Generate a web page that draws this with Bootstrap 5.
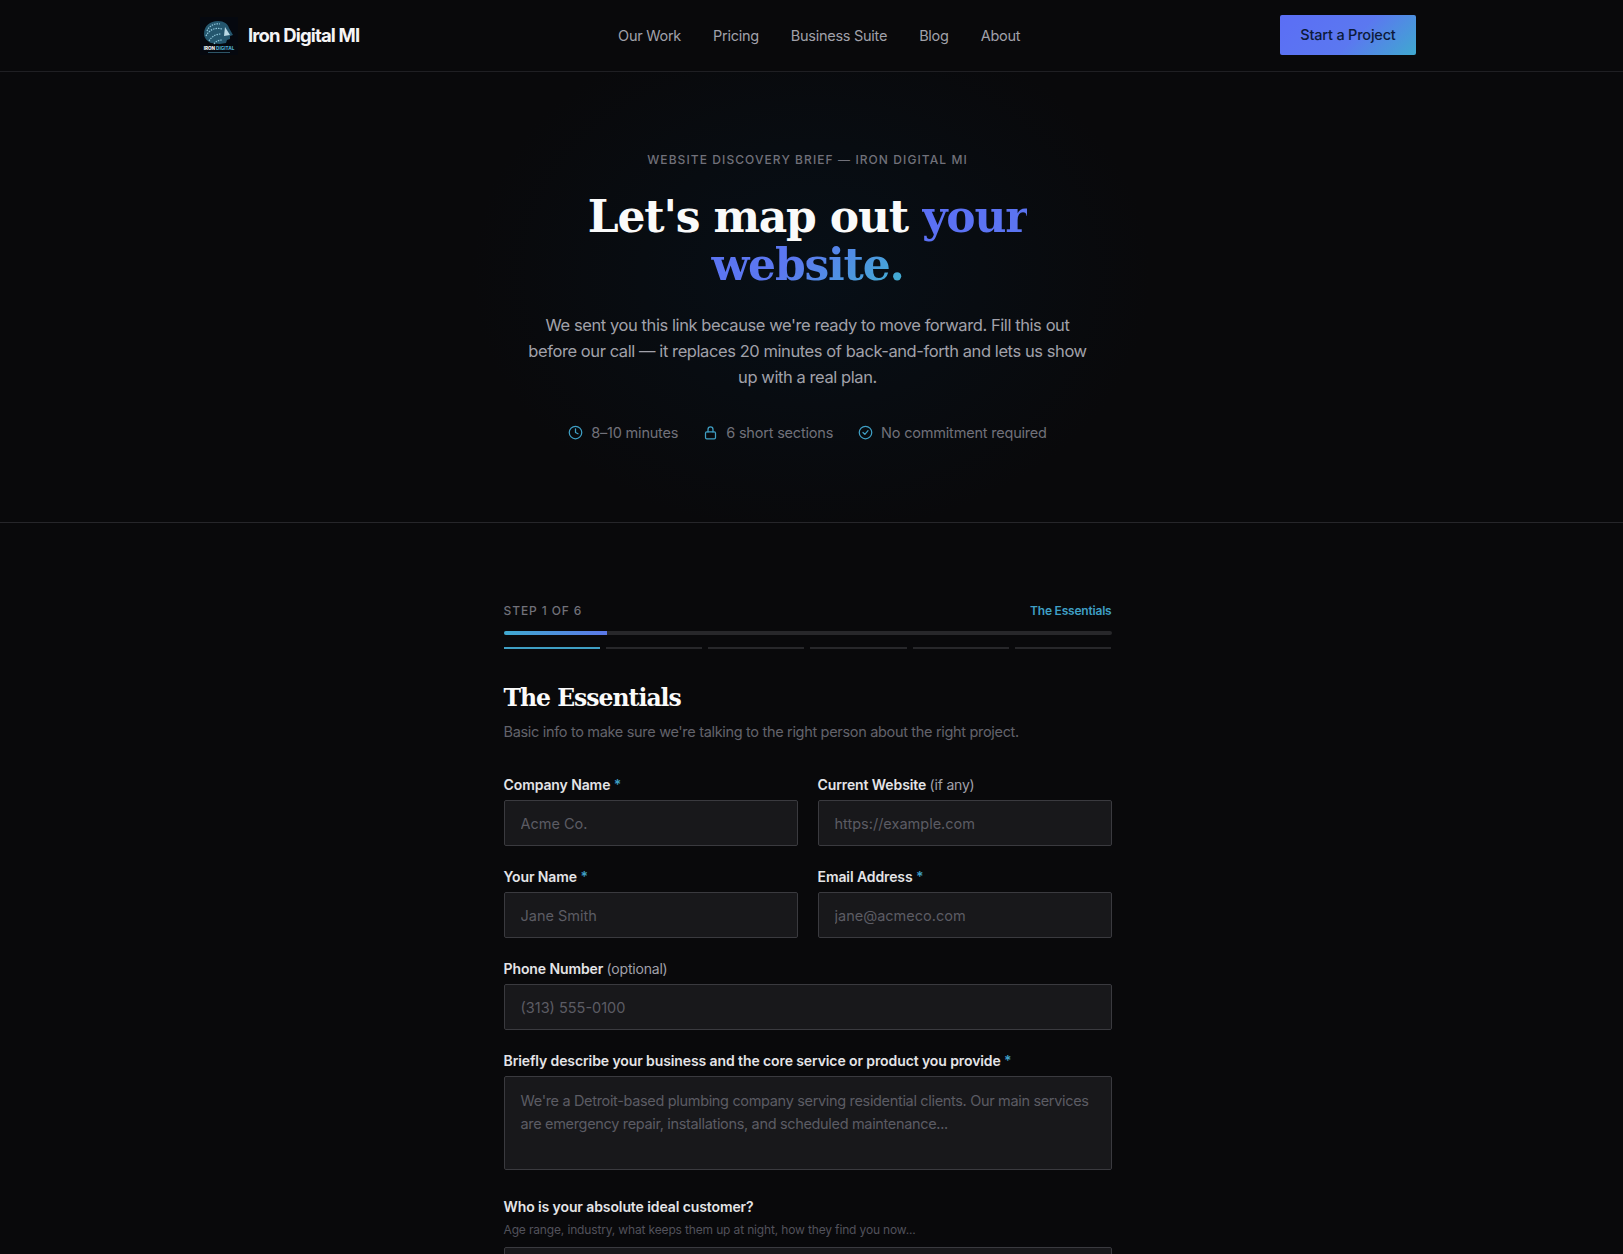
<!DOCTYPE html>
<html lang="en">
<head>
    <meta charset="UTF-8">
    <meta name="viewport" content="width=device-width, initial-scale=1.0">
    <title>Website Discovery Brief - Iron Digital MI</title>
    <link href="https://cdn.jsdelivr.net/npm/bootstrap@5.3.5/dist/css/bootstrap.min.css" rel="stylesheet">
    <style>
        html, body {
            height: 1254px;
            overflow: hidden;
        }
        body {
            font-family: Inter, "Open Sans", sans-serif;
            background-color: #09090b;
            color: #f4f4f5;
        }
        .top-bar {
            height: 72px;
            padding-right: 7px;
            border-bottom: 1px solid #1f1f23;
        }
        .top-inner {
            width: 1216px;
        }
        .brand-name {
            margin-left: 2px;
            font-size: 18.5px;
            font-weight: 700;
            letter-spacing: -0.85px;
            color: #f4f4f5;
        }
        .top-link {
            font-size: 14.5px;
            color: #a1a1aa;
            text-decoration: none;
            letter-spacing: -0.27px;
        }
        .top-links {
            gap: 32px;
            margin-right: 1px;
        }
        .start-btn {
            width: 136px;
            height: 40px;
            margin-bottom: 1px;
            font-size: 14.5px;
            font-weight: 500;
            letter-spacing: -0.2px;
            color: #0c1a3a;
            background: linear-gradient(135deg, #5b6ef5 0%, #5b78f0 55%, #3fa9cf 100%);
            border-radius: 2px;
        }
        .hero-band {
            height: 451px;
            padding: 80px 8px 0 0;
            border-bottom: 1px solid #26262a;
            background: radial-gradient(ellipse 340px 260px at 50% 45%, #070f17 0%, #09090b 100%);
        }
        .eyebrow {
            font-size: 12px;
            font-weight: 500;
            letter-spacing: 1.08px;
            color: #71717a;
            line-height: 16px;
        }
        .hero-title {
            font-family: "DejaVu Serif", serif;
            font-weight: 700;
            font-size: 44px;
            line-height: 48px;
            letter-spacing: -1.2px;
            width: 560px;
            margin: 25px auto 23px;
            color: #fafafa;
        }
        .hero-accent {
            background: linear-gradient(135deg, #5b6ef5 0%, #5b78f0 60%, #3fb2cf 100%);
            -webkit-background-clip: text;
            background-clip: text;
            color: transparent;
        }
        .hero-text {
            width: 570px;
            font-size: 16.5px;
            line-height: 26px;
            letter-spacing: -0.42px;
            color: #a1a1aa;
        }
        .hero-facts {
            margin-top: 33px;
            gap: 25px;
            font-size: 14.5px;
            letter-spacing: -0.2px;
            color: #71717a;
            line-height: 20px;
        }
        .fact-icon {
            width: 15px;
            height: 15px;
            margin-top: -2px;
            fill: none;
            stroke: #3f9fc4;
            stroke-width: 2;
            stroke-linecap: round;
            stroke-linejoin: round;
        }
        .form-page {
            padding-right: 8px;
        }
        .form-wrap {
            width: 608px;
            padding-top: 80px;
        }
        .step-label {
            font-size: 12px;
            font-weight: 500;
            letter-spacing: 0.9px;
            color: #71717a;
            line-height: 16px;
        }
        .step-name {
            font-size: 12px;
            font-weight: 600;
            letter-spacing: -0.2px;
            color: #3f9fc4;
            line-height: 16px;
        }
        .step-track {
            height: 4px;
            margin-top: 12px;
            background: #27272a;
            border-radius: 2px;
            overflow: hidden;
        }
        .step-fill {
            height: 100%;
            background: linear-gradient(90deg, #3fa9cf, #5b78e8);
        }
        .step-ticks {
            gap: 6px;
            margin-top: 12px;
        }
        .step-tick {
            height: 2px;
            background: #27272a;
        }
        .step-tick-on {
            background: #3f9fc4;
        }
        .section-title {
            font-family: "DejaVu Serif", serif;
            font-weight: 700;
            font-size: 23.5px;
            line-height: 32px;
            letter-spacing: -1px;
            color: #fafafa;
            margin: 33px 0 7px;
        }
        .section-sub {
            font-size: 14.5px;
            letter-spacing: -0.32px;
            color: #63636b;
            line-height: 22px;
            margin-bottom: 32px;
        }
        .field-grid {
            row-gap: 21px;
            column-gap: 20px;
            display: grid;
            grid-template-columns: 1fr 1fr;
        }
        .field-wide {
            grid-column: 1 / -1;
        }
        .field-label {
            display: block;
            font-size: 14px;
            font-weight: 600;
            letter-spacing: -0.1px;
            line-height: 19px;
            color: #e4e4e7;
            margin-bottom: 6px;
        }
        .field-req {
            color: #3f9fc4;
        }
        .field-opt {
            font-weight: 400;
            color: #a1a1aa;
            letter-spacing: -0.2px;
        }
        .field-hint {
            font-size: 12px;
            letter-spacing: -0.15px;
            line-height: 16px;
            color: #52525b;
            margin-bottom: 9px;
        }
        .form-control.brief-input {
            height: 46px;
            padding: 0 16px;
            font-size: 14.5px;
            letter-spacing: 0;
            color: #e4e4e7;
            background-color: #18181b;
            border: 1px solid #3a3a3f;
            border-radius: 2px;
        }
        .form-control.brief-area {
            height: 94px;
            margin-bottom: 6px;
            padding: 12px 16px;
            line-height: 23px;
            letter-spacing: -0.33px;
            resize: none;
        }
        .form-control.brief-input::placeholder {
            color: #5c5c64;
            opacity: 1;
        }
    </style>
</head>
<body>
    <!-- Top navigation -->
    <nav class="top-bar d-flex justify-content-center">
        <div class="top-inner d-flex align-items-center justify-content-between">
            <a href="#" class="d-flex align-items-center gap-2 text-decoration-none">
                <svg width="38" height="38" viewBox="0 0 38 38" class="flex-shrink-0">
                    <rect width="38" height="38" fill="#05080f"/>
                    <path d="M4 17C4 9 10 4 18 4c6 0 10 3 11 7l4 7-3 1v3l-3 1-1 3-6 1-9-1c-4-2-7-5-7-9z" fill="#24566e"/>
                    <path d="M7 14c2-5 7-8 13-7M6 19c3-6 9-9 16-7M9 24c3-5 7-7 12-7M14 27c2-3 5-4 8-4" fill="none" stroke="#8cc3d8" stroke-width="1.2" stroke-dasharray="1.5 1"/>
                    <path d="M25 10l5 8-6 1z" fill="#b9d9e5"/>
                    <text x="19" y="33" text-anchor="middle" font-family="Inter, sans-serif" font-size="4.6" font-weight="800"><tspan fill="#f0f4f6">IRON </tspan><tspan fill="#4fa8cc">DIGITAL</tspan></text>
                    <rect x="8" y="35" width="22" height="1" fill="#2d5566"/>
                </svg>
                <span class="brand-name">Iron Digital MI</span>
            </a>
            <div class="top-links d-flex align-items-center">
                <a href="#" class="top-link">Our Work</a>
                <a href="#" class="top-link">Pricing</a>
                <a href="#" class="top-link">Business Suite</a>
                <a href="#" class="top-link">Blog</a>
                <a href="#" class="top-link">About</a>
            </div>
            <a href="#" class="start-btn d-flex align-items-center justify-content-center text-decoration-none">Start a Project</a>
        </div>
    </nav>

    <!-- Hero -->
    <header class="hero-band text-center">
        <div class="eyebrow">WEBSITE DISCOVERY BRIEF — IRON DIGITAL MI</div>
        <h1 class="hero-title">Let's map out <span class="hero-accent">your website.</span></h1>
        <p class="hero-text mx-auto mb-0">We sent you this link because we're ready to move forward. Fill this out before our call — it replaces 20 minutes of back-and-forth and lets us show up with a real plan.</p>
        <div class="hero-facts d-flex justify-content-center">
            <span class="d-flex align-items-center gap-2">
                <svg class="fact-icon" viewBox="0 0 24 24"><circle cx="12" cy="12" r="10"/><path d="M12 6v6l4 2"/></svg>
                8–10 minutes
            </span>
            <span class="d-flex align-items-center gap-2">
                <svg class="fact-icon" viewBox="0 0 24 24"><rect x="4" y="11" width="16" height="11" rx="2"/><path d="M8 11V7a4 4 0 0 1 8 0v4"/></svg>
                6 short sections
            </span>
            <span class="d-flex align-items-center gap-2">
                <svg class="fact-icon" viewBox="0 0 24 24"><circle cx="12" cy="12" r="10"/><path d="M8 12l3 3 5-6"/></svg>
                No commitment required
            </span>
        </div>
    </header>

    <!-- Step one of the brief -->
    <div class="form-page">
    <main class="form-wrap mx-auto">
        <div class="d-flex justify-content-between align-items-center">
            <span class="step-label">STEP 1 OF 6</span>
            <span class="step-name">The Essentials</span>
        </div>
        <div class="step-track"><div class="step-fill" style="width: 17%"></div></div>
        <div class="step-ticks d-flex">
            <div class="step-tick step-tick-on flex-fill"></div>
            <div class="step-tick flex-fill"></div>
            <div class="step-tick flex-fill"></div>
            <div class="step-tick flex-fill"></div>
            <div class="step-tick flex-fill"></div>
            <div class="step-tick flex-fill"></div>
        </div>

        <h2 class="section-title">The Essentials</h2>
        <p class="section-sub">Basic info to make sure we're talking to the right person about the right project.</p>

        <form class="field-grid">
            <div>
                <label class="field-label" for="company">Company Name <span class="field-req">*</span></label>
                <input id="company" type="text" class="form-control brief-input" placeholder="Acme Co.">
            </div>
            <div>
                <label class="field-label" for="website">Current Website <span class="field-opt">(if any)</span></label>
                <input id="website" type="text" class="form-control brief-input" placeholder="https://example.com">
            </div>
            <div>
                <label class="field-label" for="yourName">Your Name <span class="field-req">*</span></label>
                <input id="yourName" type="text" class="form-control brief-input" placeholder="Jane Smith">
            </div>
            <div>
                <label class="field-label" for="email">Email Address <span class="field-req">*</span></label>
                <input id="email" type="email" class="form-control brief-input" placeholder="jane@acmeco.com">
            </div>
            <div class="field-wide">
                <label class="field-label" for="phone">Phone Number <span class="field-opt">(optional)</span></label>
                <input id="phone" type="text" class="form-control brief-input" placeholder="(313) 555-0100">
            </div>
            <div class="field-wide">
                <label class="field-label" for="about">Briefly describe your business and the core service or product you provide <span class="field-req">*</span></label>
                <textarea id="about" class="form-control brief-input brief-area" placeholder="We're a Detroit-based plumbing company serving residential clients. Our main services are emergency repair, installations, and scheduled maintenance..."></textarea>
            </div>
            <div class="field-wide">
                <label class="field-label" for="ideal">Who is your absolute ideal customer?</label>
                <div class="field-hint">Age range, industry, what keeps them up at night, how they find you now...</div>
                <textarea id="ideal" class="form-control brief-input brief-area"></textarea>
            </div>
        </form>
    </main>
    </div>
    <script src="https://cdn.jsdelivr.net/npm/bootstrap@5.3.5/dist/js/bootstrap.bundle.min.js"></script>
</body>
</html>
